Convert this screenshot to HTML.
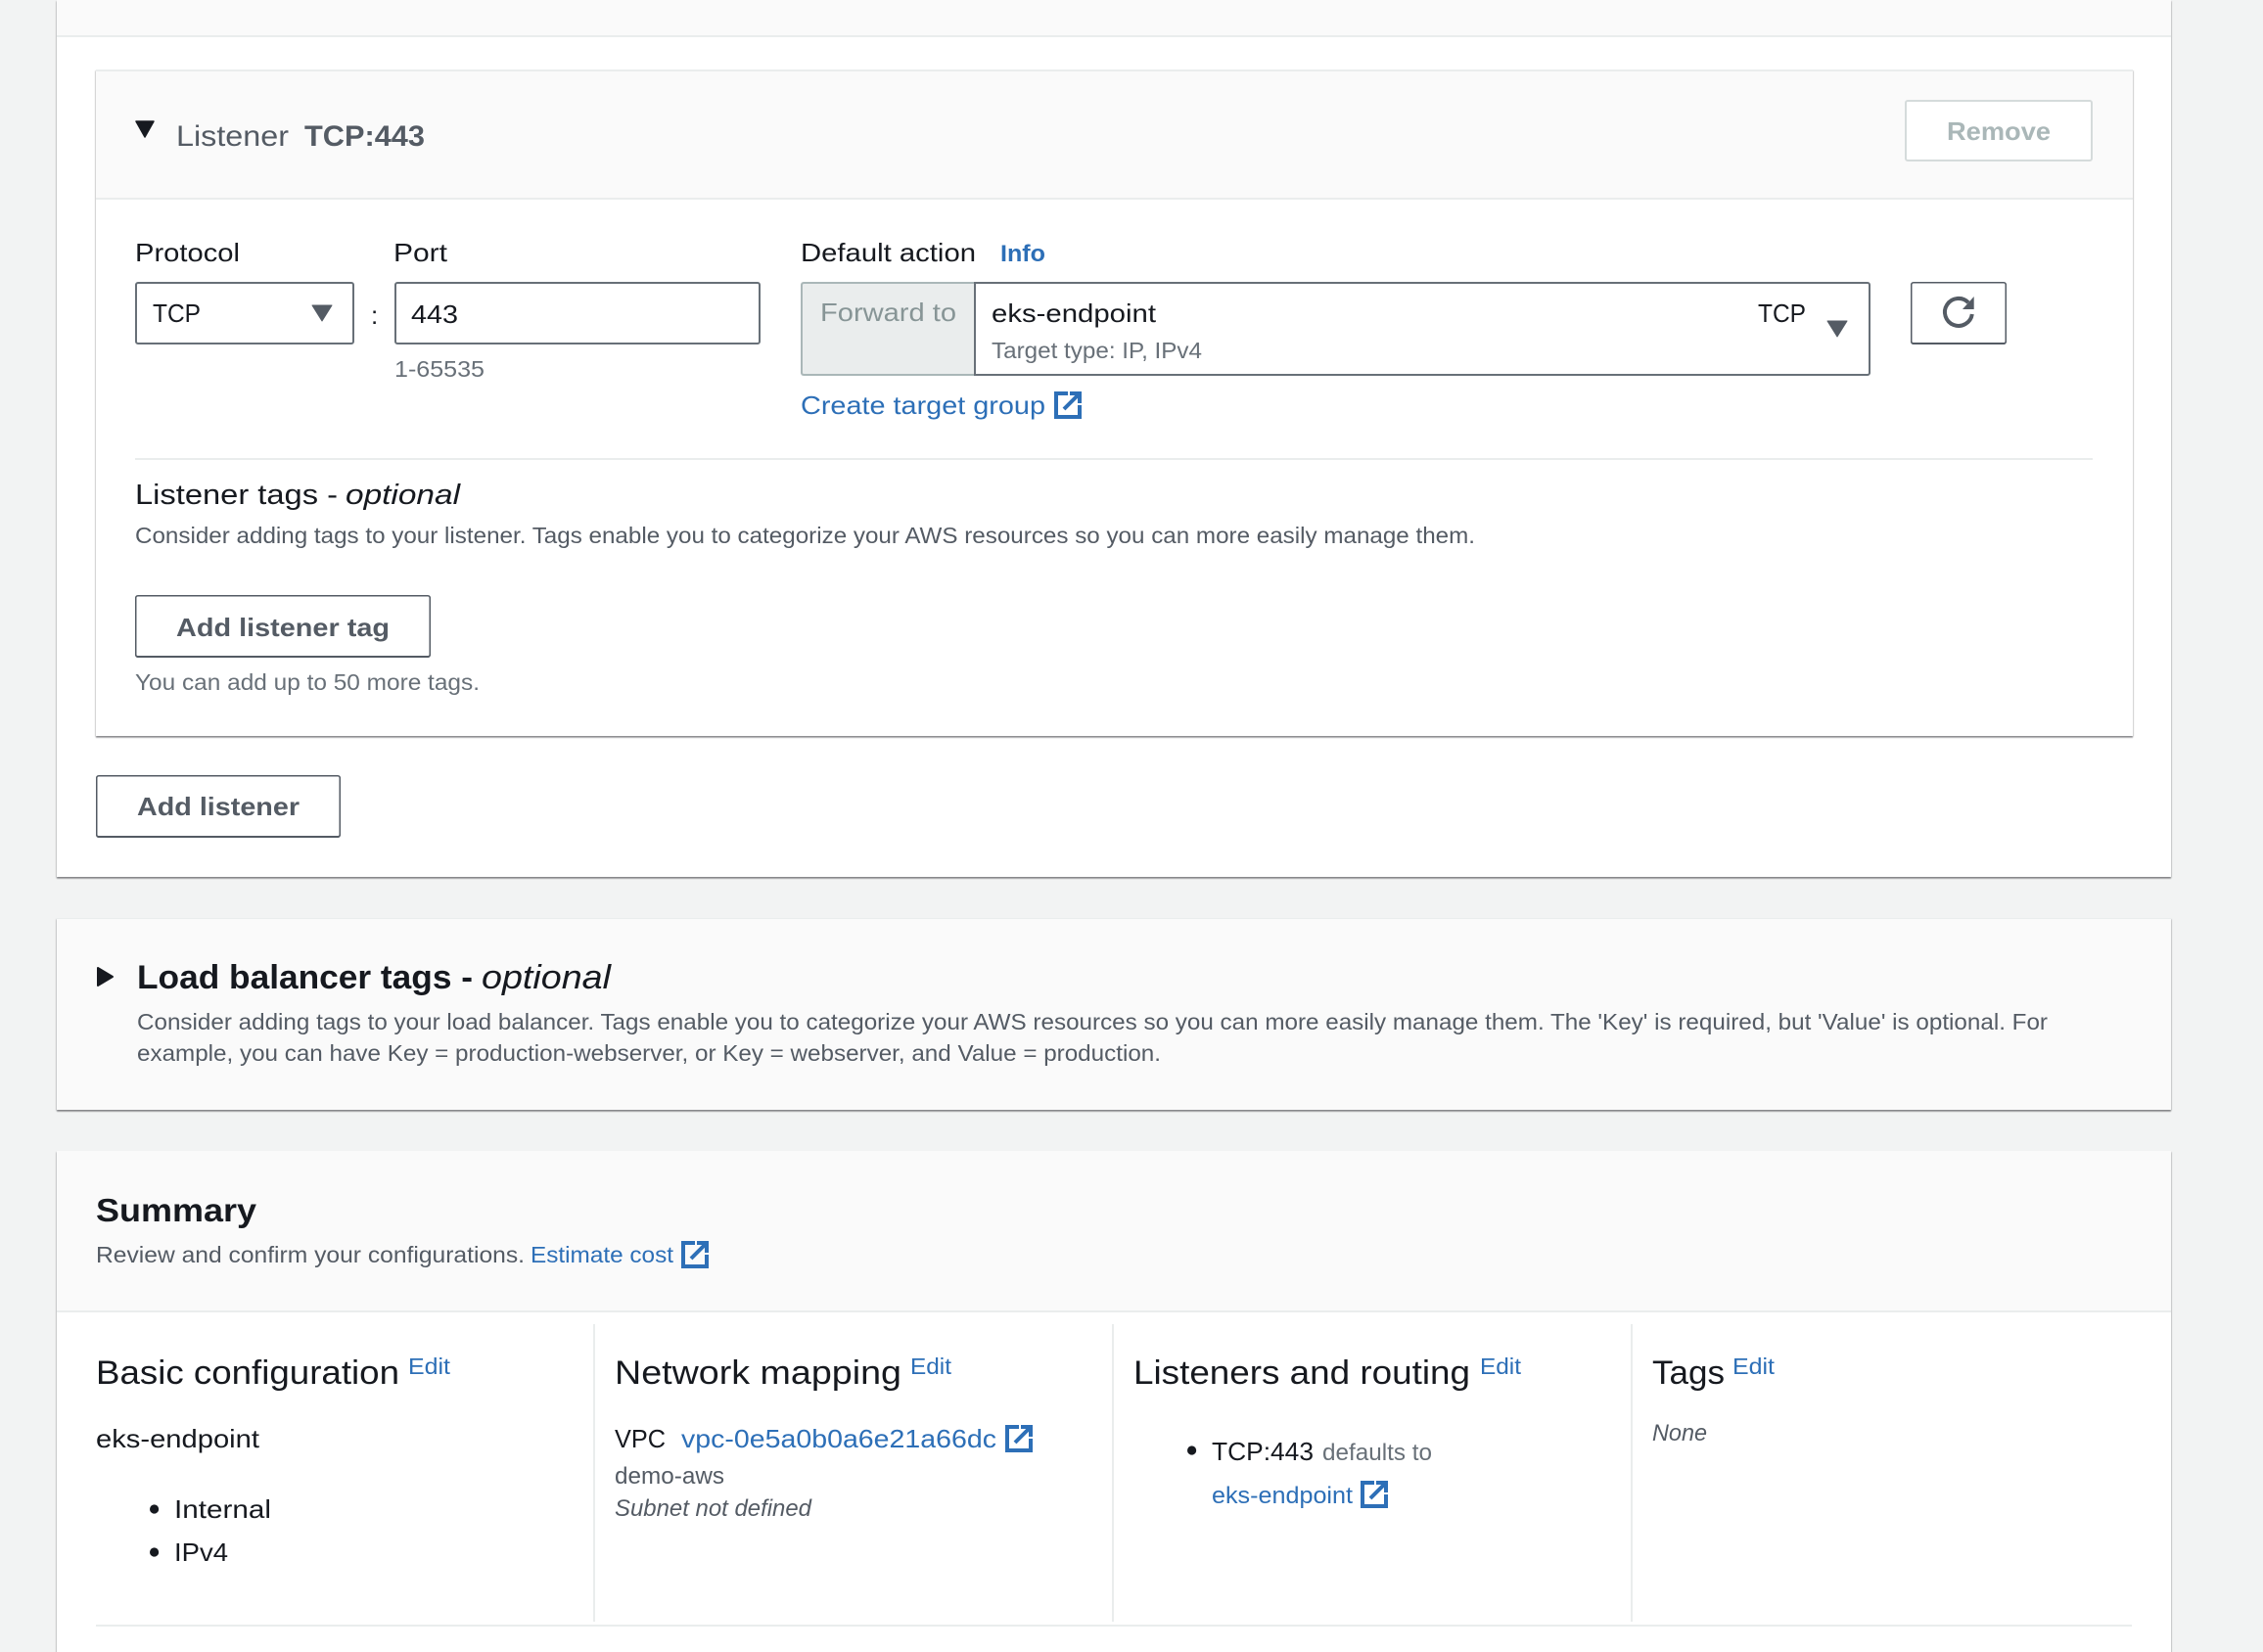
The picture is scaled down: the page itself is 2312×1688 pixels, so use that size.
<!DOCTYPE html>
<html lang="en">
<head>
<meta charset="utf-8">
<title>Load balancer listener</title>
<style>
html,body{margin:0;padding:0;background:#f2f3f3;width:2312px;height:1688px;overflow:hidden}
body{position:relative}
.b{position:absolute;box-sizing:border-box}
.panel{background:#fff;box-shadow:0 2px 1px rgba(30,30,35,.34),1px 1px 1px rgba(30,30,35,.15),-1px 1px 1px rgba(30,30,35,.15)}
.hd{background:#fafafa;border-bottom:2px solid #eaeded}
.ctl{background:#fff;border:2px solid #687078;border-radius:3px}
.btn{background:#fff;border-radius:3px;box-shadow:inset 0 0 0 1.5px #545b64,inset 0 -1px 0 1px #545b64}
svg{position:absolute;left:0;top:0}
text{font-family:"Liberation Sans",sans-serif;white-space:pre}
.d{fill:#16191f}.g{fill:#545b64}.m{fill:#687078}.l{fill:#2d6fb7}
</style>
</head>
<body>
<!-- outer panel -->
<div class="b panel" style="left:58px;top:0;width:2160px;height:896px"></div>
<div class="b hd" style="left:58px;top:0;width:2160px;height:38px"></div>
<!-- listener card -->
<div class="b panel" style="left:98px;top:71px;width:2081px;height:681px;border-top:2px solid #eaeded"></div>
<div class="b hd" style="left:98px;top:73px;width:2081px;height:131px"></div>
<div class="b" style="left:1946px;top:102px;width:192px;height:63px;background:#fff;border:2px solid #d5dbdb;border-radius:3px"></div>
<div class="b ctl" style="left:138px;top:288px;width:224px;height:64px"></div>
<div class="b ctl" style="left:403px;top:288px;width:374px;height:64px"></div>
<div class="b" style="left:818px;top:288px;width:179px;height:96px;background:#eaeded;border:2px solid #aab7b8;border-right:0;border-radius:3px 0 0 3px"></div>
<div class="b ctl" style="left:995px;top:288px;width:916px;height:96px;border-radius:0 3px 3px 0"></div>
<div class="b btn" style="left:1952px;top:288px;width:98px;height:64px"></div>
<div class="b" style="left:138px;top:468px;width:2000px;height:2px;background:#eaeded"></div>
<div class="b btn" style="left:138px;top:608px;width:302px;height:64px"></div>
<div class="b btn" style="left:98px;top:792px;width:250px;height:64px"></div>
<!-- tags card -->
<div class="b panel" style="left:58px;top:938px;width:2160px;height:196px;background:#fafafa;border-top:1px solid #eaeded"></div>
<!-- summary -->
<div class="b panel" style="left:58px;top:1176px;width:2160px;height:512px"></div>
<div class="b hd" style="left:58px;top:1176px;width:2160px;height:165px"></div>
<div class="b" style="left:606px;top:1353px;width:2px;height:304px;background:#eaeded"></div>
<div class="b" style="left:1136px;top:1353px;width:2px;height:304px;background:#eaeded"></div>
<div class="b" style="left:1666px;top:1353px;width:2px;height:304px;background:#eaeded"></div>
<div class="b" style="left:98px;top:1660px;width:2080px;height:2px;background:#eaeded"></div>

<svg width="2312" height="1688" viewBox="0 0 2312 1688" xmlns="http://www.w3.org/2000/svg">
<defs>
<g id="x" fill="none" stroke="#2d6fb7" stroke-width="4">
<path d="M14 2H2V26H26V14"/><path d="M16 2H26V12"/><path d="M26 2L10 18"/>
</g>
</defs>

<path d="M139 124H157L148 140Z" fill="#16191f" stroke="#16191f" stroke-width="1.5" stroke-linejoin="round"/>
<text class="g" x="180" y="149" font-size="30" textLength="115" lengthAdjust="spacingAndGlyphs">Listener</text>
<text class="g" x="311" y="149" font-size="30" font-weight="700" textLength="123" lengthAdjust="spacingAndGlyphs">TCP:443</text>
<text x="1989" y="143" font-size="26" font-weight="700" fill="#aab7b8" textLength="106" lengthAdjust="spacingAndGlyphs">Remove</text>

<text class="d" x="138" y="267" font-size="26" textLength="107" lengthAdjust="spacingAndGlyphs">Protocol</text>
<text class="d" x="402" y="267" font-size="26" textLength="55" lengthAdjust="spacingAndGlyphs">Port</text>
<text class="d" x="818" y="267" font-size="26" textLength="179" lengthAdjust="spacingAndGlyphs">Default action</text>
<text class="l" x="1022" y="267" font-size="24" font-weight="700" textLength="46" lengthAdjust="spacingAndGlyphs">Info</text>

<text class="d" x="156" y="329" font-size="26" textLength="49" lengthAdjust="spacingAndGlyphs">TCP</text>
<path d="M319 312H339L329 328Z" fill="#545b64" stroke="#545b64" stroke-linejoin="round"/>
<text class="d" x="379" y="331" font-size="26">:</text>
<text class="d" x="420" y="330" font-size="26" textLength="48" lengthAdjust="spacingAndGlyphs">443</text>
<text class="m" x="403" y="385" font-size="23" textLength="92" lengthAdjust="spacingAndGlyphs">1-65535</text>

<text x="838" y="328" font-size="26" fill="#879596" textLength="139" lengthAdjust="spacingAndGlyphs">Forward to</text>
<text class="d" x="1013" y="329" font-size="26" textLength="168" lengthAdjust="spacingAndGlyphs">eks-endpoint</text>
<text class="d" x="1796" y="329" font-size="26" textLength="49" lengthAdjust="spacingAndGlyphs">TCP</text>
<path d="M1867 328H1887L1877 344Z" fill="#545b64" stroke="#545b64" stroke-linejoin="round"/>
<text class="m" x="1013" y="366" font-size="23" textLength="215" lengthAdjust="spacingAndGlyphs">Target type: IP, IPv4</text>

<path d="M2014.8 321A14 14 0 1 1 2011 309.2" fill="none" stroke="#545b64" stroke-width="4"/>
<path d="M2016.7 303V316H2005Z" fill="#545b64"/>

<text class="l" x="818" y="423" font-size="26" textLength="250" lengthAdjust="spacingAndGlyphs">Create target group</text>
<use href="#x" x="1077" y="400"/>

<text class="d" x="138" y="515" font-size="29" textLength="207" lengthAdjust="spacingAndGlyphs">Listener tags -</text>
<text class="d" x="353" y="515" font-size="29" font-style="italic" textLength="117" lengthAdjust="spacingAndGlyphs">optional</text>
<text class="g" x="138" y="555" font-size="23" textLength="1369" lengthAdjust="spacingAndGlyphs">Consider adding tags to your listener. Tags enable you to categorize your AWS resources so you can more easily manage them.</text>
<text class="g" x="180" y="650" font-size="26" font-weight="700" textLength="218" lengthAdjust="spacingAndGlyphs">Add listener tag</text>
<text class="m" x="138" y="705" font-size="23" textLength="352" lengthAdjust="spacingAndGlyphs">You can add up to 50 more tags.</text>
<text class="g" x="140" y="833" font-size="26" font-weight="700" textLength="166" lengthAdjust="spacingAndGlyphs">Add listener</text>

<path d="M100 989L115 998L100 1007Z" fill="#16191f" stroke="#16191f" stroke-width="2" stroke-linejoin="round"/>
<text class="d" x="140" y="1010" font-size="34" font-weight="700" textLength="343" lengthAdjust="spacingAndGlyphs">Load balancer tags -</text>
<text class="d" x="492" y="1010" font-size="34" font-style="italic" textLength="132" lengthAdjust="spacingAndGlyphs">optional</text>
<text class="g" x="140" y="1052" font-size="23" textLength="1952" lengthAdjust="spacingAndGlyphs">Consider adding tags to your load balancer. Tags enable you to categorize your AWS resources so you can more easily manage them. The 'Key' is required, but 'Value' is optional. For</text>
<text class="g" x="140" y="1084" font-size="23" textLength="1046" lengthAdjust="spacingAndGlyphs">example, you can have Key = production-webserver, or Key = webserver, and Value = production.</text>

<text class="d" x="98" y="1248" font-size="33" font-weight="700" textLength="164" lengthAdjust="spacingAndGlyphs">Summary</text>
<text class="g" x="98" y="1290" font-size="23" textLength="438" lengthAdjust="spacingAndGlyphs">Review and confirm your configurations.</text>
<text class="l" x="542" y="1290" font-size="23" textLength="146" lengthAdjust="spacingAndGlyphs">Estimate cost</text>
<use href="#x" x="696" y="1268"/>

<text class="d" x="98" y="1414" font-size="34" textLength="310" lengthAdjust="spacingAndGlyphs">Basic configuration</text>
<text class="l" x="417" y="1404" font-size="23" textLength="43" lengthAdjust="spacingAndGlyphs">Edit</text>
<text class="d" x="98" y="1479" font-size="26" textLength="167" lengthAdjust="spacingAndGlyphs">eks-endpoint</text>
<circle cx="157.6" cy="1542" r="4.6" fill="#16191f"/>
<text class="d" x="178" y="1551" font-size="26" textLength="99" lengthAdjust="spacingAndGlyphs">Internal</text>
<circle cx="157.6" cy="1586" r="4.6" fill="#16191f"/>
<text class="d" x="178" y="1595" font-size="26" textLength="55" lengthAdjust="spacingAndGlyphs">IPv4</text>

<text class="d" x="628" y="1414" font-size="34" textLength="293" lengthAdjust="spacingAndGlyphs">Network mapping</text>
<text class="l" x="930" y="1404" font-size="23" textLength="42" lengthAdjust="spacingAndGlyphs">Edit</text>
<text class="d" x="628" y="1479" font-size="26" textLength="52" lengthAdjust="spacingAndGlyphs">VPC</text>
<text class="l" x="696" y="1479" font-size="26" textLength="322" lengthAdjust="spacingAndGlyphs">vpc-0e5a0b0a6e21a66dc</text>
<use href="#x" x="1027" y="1456"/>
<text class="g" x="628" y="1516" font-size="24" textLength="112" lengthAdjust="spacingAndGlyphs">demo-aws</text>
<text class="g" x="628" y="1549" font-size="24" font-style="italic" textLength="201" lengthAdjust="spacingAndGlyphs">Subnet not defined</text>

<text class="d" x="1158" y="1414" font-size="34" textLength="344" lengthAdjust="spacingAndGlyphs">Listeners and routing</text>
<text class="l" x="1512" y="1404" font-size="23" textLength="42" lengthAdjust="spacingAndGlyphs">Edit</text>
<circle cx="1217.6" cy="1482" r="4.6" fill="#16191f"/>
<text class="d" x="1238" y="1492" font-size="26" textLength="104" lengthAdjust="spacingAndGlyphs">TCP:443</text>
<text class="m" x="1351" y="1492" font-size="24" textLength="112" lengthAdjust="spacingAndGlyphs">defaults to</text>
<text class="l" x="1238" y="1536" font-size="24" textLength="144" lengthAdjust="spacingAndGlyphs">eks-endpoint</text>
<use href="#x" x="1390" y="1513"/>

<text class="d" x="1688" y="1414" font-size="34" textLength="74" lengthAdjust="spacingAndGlyphs">Tags</text>
<text class="l" x="1770" y="1404" font-size="23" textLength="43" lengthAdjust="spacingAndGlyphs">Edit</text>
<text class="g" x="1688" y="1472" font-size="24" font-style="italic" textLength="56" lengthAdjust="spacingAndGlyphs">None</text>
</svg>
</body>
</html>
